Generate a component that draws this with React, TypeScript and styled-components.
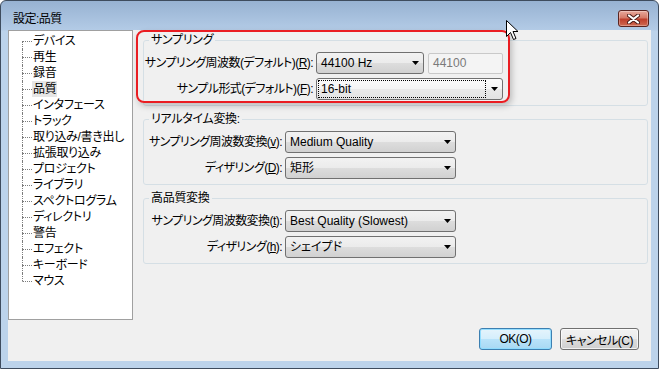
import React from 'react';
import styled, { createGlobalStyle } from 'styled-components';

const GlobalStyle = createGlobalStyle`
  html, body { margin: 0; padding: 0; background: #ffffff; }
  body {
    font-family: "Liberation Sans", "Noto Sans CJK JP", sans-serif;
    font-size: 12px;
    color: #000;
    font-feature-settings: "palt";
  }
  * { box-sizing: border-box; }
`;

const Window = styled.div`
  position: relative;
  width: 659px;
  height: 369px;
  border: 1px solid #3e4c5e;
  border-radius: 6px 6px 0 0;
  background: linear-gradient(to bottom, #97b2d2 0px, #b3cbe6 29px, #bcd3eb 30px, #bcd3eb 100%);
  padding: 0 7px 7px 7px;
  display: flex;
  flex-direction: column;
  overflow: hidden;
`;

const TitleBar = styled.div`
  height: 29px;
  flex: none;
  display: flex;
  align-items: flex-start;
  justify-content: space-between;
  padding: 0 2px 0 5px;
`;

const Title = styled.span`
  margin-top: 11px;
  line-height: 14px;
  font-size: 12px;
  color: #000;
  letter-spacing: -0.5px;
`;

const CloseButton = styled.div`
  width: 31px;
  height: 17px;
  margin-top: 9px;
  border: 1px solid #5a2420;
  border-radius: 3px;
  background: linear-gradient(to bottom, #e8a99c 0%, #d67a68 45%, #bf3f2c 55%, #cf6a52 100%);
  box-shadow: inset 0 0 0 1px rgba(255, 255, 255, 0.3);
  display: flex;
  align-items: center;
  justify-content: center;
`;

const Client = styled.div`
  flex: 1;
  background: #f0f0f0;
  display: grid;
  grid-template-columns: 125px 1fr;
  grid-template-rows: 290px 1fr;
`;

const Tree = styled.div`
  background: #ffffff;
  border: 1px solid #a0a0a0;
  padding: 2px 0 0 13px;
  display: flex;
  flex-direction: column;
`;

const TreeItem = styled.div`
  height: 16px;
  display: flex;
  align-items: stretch;
`;

const Connector = styled.span<{ $first?: boolean; $last?: boolean }>`
  width: 10px;
  flex: none;
  display: grid;
  grid-template-rows: 8px 8px;
  &::before {
    content: '';
    border-left: 1px dotted ${(p) => (p.$first ? 'transparent' : '#7c7c7c')};
  }
  &::after {
    content: '';
    border-left: 1px dotted ${(p) => (p.$last ? 'transparent' : '#7c7c7c')};
    border-top: 1px dotted #7c7c7c;
  }
`;

const TreeLabel = styled.span<{ $selected?: boolean }>`
  padding: 0 1px;
  line-height: 16px;
  white-space: nowrap;
  letter-spacing: -0.3px;
  background: ${(p) => (p.$selected ? '#e6e6e6' : 'transparent')};
`;

const Panel = styled.div`
  padding: 3px 3px 0 10px;
  display: flex;
  flex-direction: column;
  gap: 6px;
`;

const Group = styled.fieldset`
  margin: 0;
  min-width: 0;
  border: 1px solid #d5dfe5;
  border-radius: 3px;
  padding: 5px 0 5px 0;
  display: flex;
  flex-direction: column;
  gap: 4px;
`;

const Legend = styled.legend`
  margin-left: 5px;
  padding: 0 2px;
  height: 14px;
  line-height: 14px;
  letter-spacing: -0.3px;
`;

const Row = styled.div`
  height: 22px;
  display: flex;
  align-items: center;
  gap: 3px;
`;

const Label = styled.label<{ $w: number }>`
  width: ${(p) => p.$w}px;
  flex: none;
  display: flex;
  justify-content: flex-end;
  white-space: nowrap;
  line-height: 14px;
  letter-spacing: -0.55px;
`;

const Acc = styled.span`
  text-decoration: underline;
`;

const SelectBox = styled.div<{ $w: number; $focused?: boolean }>`
  width: ${(p) => p.$w}px;
  height: 22px;
  flex: none;
  border: 1px solid #707070;
  border-radius: 3px;
  background: ${(p) =>
    p.$focused
      ? 'linear-gradient(to bottom, #fbfbfb 0%, #f4f4f4 50%, #eaeaea 50%, #e3e3e3 100%)'
      : 'linear-gradient(to bottom, #f2f2f2 0%, #ebebeb 50%, #dddddd 50%, #d1d1d1 100%)'};
  display: flex;
  align-items: center;
  padding: 1px 0 1px 1px;
`;

const SelectText = styled.span<{ $focused?: boolean }>`
  flex: 1;
  height: 18px;
  line-height: 16px;
  padding-left: 2px;
  border: 1px dotted ${(p) => (p.$focused ? '#000' : 'transparent')};
  white-space: nowrap;
  font-size: 12px;
`;

const ArrowCell = styled.span`
  width: 16px;
  flex: none;
  display: flex;
  align-items: center;
  justify-content: center;
`;

const TextField = styled.div<{ $w: number }>`
  width: ${(p) => p.$w}px;
  height: 21px;
  flex: none;
  margin-left: 1px;
  border: 1px solid #c9c9c9;
  border-radius: 2px;
  background: #f4f4f4;
  color: #7a7a7a;
  padding-left: 4px;
  line-height: 19px;
`;

const Footer = styled.div`
  grid-column: 1 / span 2;
  display: flex;
  justify-content: flex-end;
  align-items: flex-start;
  gap: 8px;
  padding: 8px 12px 0 0;
`;

const Button = styled.button<{ $w: number; $default?: boolean }>`
  width: ${(p) => p.$w}px;
  height: 22px;
  padding: 0;
  font: inherit;
  font-size: 12px;
  letter-spacing: -0.5px;
  white-space: nowrap;
  color: #000;
  border-radius: 3px;
  border: 1px solid ${(p) => (p.$default ? '#3c7fb1' : '#707070')};
  background: ${(p) =>
    p.$default
      ? 'linear-gradient(to bottom, #e5f4fc 0%, #d4eefc 50%, #b9e3fa 50%, #a8d8f3 100%)'
      : 'linear-gradient(to bottom, #f2f2f2 0%, #ebebeb 50%, #dddddd 50%, #cfcfcf 100%)'};
  box-shadow: inset 0 0 0 1px ${(p) => (p.$default ? 'rgba(140,220,255,0.9)' : 'rgba(255,255,255,0.7)')};
`;

const Highlight = styled.div`
  position: absolute;
  left: 135px;
  top: 29px;
  width: 374px;
  height: 73px;
  border: 2px solid #ea1d22;
  border-radius: 8px;
  box-shadow: 2px 3px 6px rgba(0, 0, 0, 0.22);
  pointer-events: none;
`;

const Cursor = styled.svg`
  position: absolute;
  left: 505px;
  top: 19px;
  pointer-events: none;
`;

const Arrow = () => (
  <svg width="7" height="4" viewBox="0 0 7 4">
    <path d="M0 0 H7 L3.5 4 Z" fill="#000" />
  </svg>
);

const Select: React.FC<{ w: number; focused?: boolean; children: React.ReactNode }> = ({ w, focused, children }) => (
  <SelectBox $w={w} $focused={focused}>
    <SelectText $focused={focused}>{children}</SelectText>
    <ArrowCell>
      <Arrow />
    </ArrowCell>
  </SelectBox>
);

const treeItems = [
  'デバイス',
  '再生',
  '録音',
  '品質',
  'インタフェース',
  'トラック',
  '取り込み/書き出し',
  '拡張取り込み',
  'プロジェクト',
  'ライブラリ',
  'スペクトログラム',
  'ディレクトリ',
  '警告',
  'エフェクト',
  'キーボード',
  'マウス',
];

export default function App() {
  return (
    <>
      <GlobalStyle />
      <Window>
        <TitleBar>
          <Title>設定:品質</Title>
          <CloseButton>
            <svg width="13" height="10" viewBox="0 0 13 10">
              <path d="M2 1.5 L11 8.5 M11 1.5 L2 8.5" stroke="#4a1c18" strokeWidth="4" strokeLinecap="round" />
              <path d="M2 1.5 L11 8.5 M11 1.5 L2 8.5" stroke="#ffffff" strokeWidth="2.2" strokeLinecap="round" />
            </svg>
          </CloseButton>
        </TitleBar>
        <Client>
          <Tree>
            {treeItems.map((t, i) => (
              <TreeItem key={t}>
                <Connector $first={i === 0} $last={i === treeItems.length - 1} />
                <TreeLabel $selected={t === '品質'}>{t}</TreeLabel>
              </TreeItem>
            ))}
          </Tree>
          <Panel>
            <Group>
              <Legend>サンプリング</Legend>
              <Row>
                <Label $w={169}>
                  サンプリング周波数(デフォルト)(<Acc>R</Acc>):
                </Label>
                <Select w={108}>44100 Hz</Select>
                <TextField $w={75}>44100</TextField>
              </Row>
              <Row>
                <Label $w={169}>
                  サンプル形式(デフォルト)(<Acc>F</Acc>):
                </Label>
                <Select w={187} focused>
                  16-bit
                </Select>
              </Row>
            </Group>
            <Group>
              <Legend>リアルタイム変換:</Legend>
              <Row>
                <Label $w={138}>
                  サンプリング周波数変換(<Acc>v</Acc>):
                </Label>
                <Select w={171}>Medium Quality</Select>
              </Row>
              <Row>
                <Label $w={138}>
                  ディザリング(<Acc>D</Acc>):
                </Label>
                <Select w={171}>矩形</Select>
              </Row>
            </Group>
            <Group>
              <Legend>高品質変換</Legend>
              <Row>
                <Label $w={138}>
                  サンプリング周波数変換(<Acc>t</Acc>):
                </Label>
                <Select w={171}>Best Quality (Slowest)</Select>
              </Row>
              <Row>
                <Label $w={138}>
                  ディザリング(<Acc>h</Acc>):
                </Label>
                <Select w={171}>シェイプド</Select>
              </Row>
            </Group>
          </Panel>
          <Footer>
            <Button $w={73} $default>
              OK(O)
            </Button>
            <Button $w={79}>キャンセル(C)</Button>
          </Footer>
        </Client>
        <Highlight />
        <Cursor width="13" height="21" viewBox="0 0 13 21">
          <path d="M0.5 0.5 V16.5 L4.5 12.5 L7.5 19.5 L10 18.5 L7 11.5 H12 Z" fill="#fff" stroke="#000" strokeWidth="1" strokeLinejoin="miter" />
        </Cursor>
      </Window>
    </>
  );
}
